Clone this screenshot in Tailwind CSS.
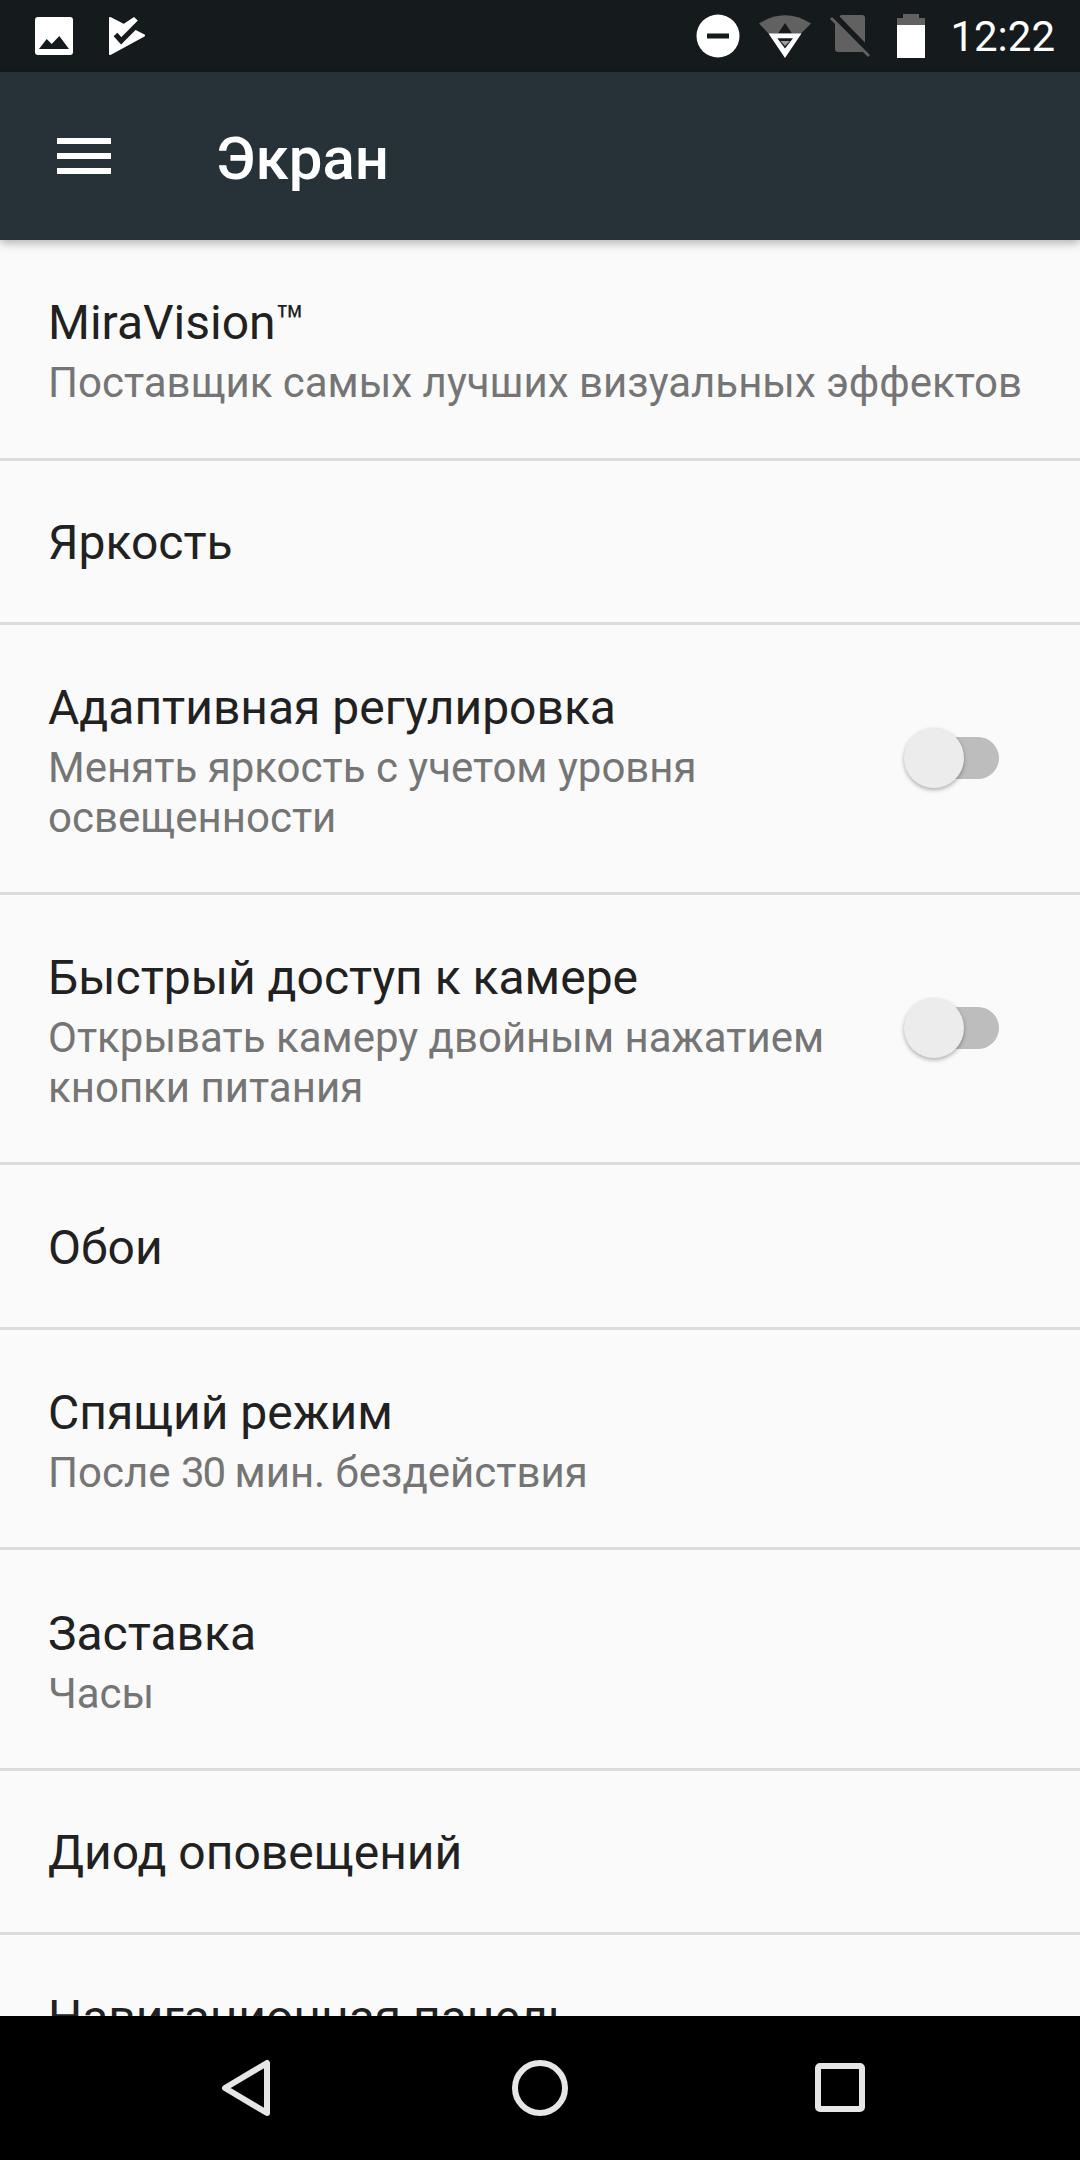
<!DOCTYPE html>
<html lang="ru">
<head>
  <meta charset="UTF-8">
  <title>Экран</title>
  <script src="https://cdn.jsdelivr.net/npm/@tailwindcss/browser@4"></script>
</head>
<body class="bg-[#fafafa] font-['Roboto',sans-serif]">
<div class="w-[1080px] h-[2160px] relative overflow-hidden flex flex-col">

  <!-- status bar -->
  <div class="h-[72px] shrink-0 bg-[#151a1d] flex items-center pl-[35px] pr-[25px]">
    <svg width="38" height="38" viewBox="0 0 38 38"><path fill="#fff" fill-rule="evenodd" d="M3 0h32a3 3 0 0 1 3 3v32a3 3 0 0 1-3 3H3a3 3 0 0 1-3-3V3a3 3 0 0 1 3-3zM4 32h30L24.300 19l-7.600 8-5-5z"/></svg>
    <svg class="ml-[36px]" width="38" height="38" viewBox="0 0 38 38"><path fill="#fff" stroke="#fff" stroke-width="2" stroke-linejoin="round" d="M1 1 35 18.500 1 37z"/><path fill="#fff" d="M25 0l4 3.700L14 19 10 10z"/><path fill="none" stroke="#151a1d" stroke-width="5" d="M6.500 17.500 12.200 23.800 31 5"/></svg>
    <div class="ml-auto flex items-center">
      <svg width="44" height="44" viewBox="0 0 44 44"><circle cx="22" cy="22" r="21.500" fill="#fff"/><rect x="11" y="19.500" width="22" height="5" fill="#151a1d"/></svg>
      <svg class="ml-[19px]" width="53" height="44" viewBox="0 0 53 44"><path fill="#616161" d="M0 9.500Q26-7 52 9.500L41 20.500H10.500z"/><path fill="#151a1d" d="M26 9l7 10.500H19z"/><path fill="#fff" fill-rule="evenodd" d="M9.500 19.500h33L26 44zM18.300 24.300 26 34.500 34 24.300z"/><path fill="#9e9e9e" d="M21.500 27h9.500L26 32z"/></svg>
      <svg class="ml-[18px]" width="40" height="44" viewBox="0 0 40 44"><path fill="#616161" d="M11 1h21a3 3 0 0 1 3 3v31a3 3 0 0 1-3 3H8a3 3 0 0 1-3-3V7z"/><path stroke="#151a1d" stroke-width="6" d="M4 1l37 38"/><path stroke="#616161" stroke-width="3" d="M1 4l38 38"/></svg>
      <svg class="ml-[27px]" width="28" height="44" viewBox="0 0 28 44"><path fill="#616161" d="M6 0h16v4h6v8H0V4h6z"/><rect y="11" width="28" height="33" fill="#fff"/></svg>
      <span class="ml-[25px] pt-[2px] text-[42px] leading-[44px] text-white">12:22</span>
    </div>
  </div>

  <!-- toolbar -->
  <div class="h-[168px] shrink-0 bg-[#263238] flex items-center pl-[57px] shadow-[0_4px_8px_rgba(0,0,0,0.25)] relative z-10">
    <div class="w-[54px] flex flex-col gap-[9px]">
      <div class="h-[6px] bg-white"></div>
      <div class="h-[6px] bg-white"></div>
      <div class="h-[6px] bg-white"></div>
    </div>
    <span class="ml-[105px] pt-[5px] text-[60px] font-medium text-white">Экран</span>
  </div>

  <!-- settings list -->
  <div class="flex-1 flex flex-col text-[48px] leading-[60px] text-[#212121]">
    <div class="h-[221px] shrink-0 border-b-[3px] border-[#dcdcdc] pt-[3px] px-[48px] flex flex-col justify-center">
      <div>MiraVision™</div>
      <div class="mt-[5px] text-[42px] leading-[50px] text-[#757575]">Поставщик самых лучших визуальных эффектов</div>
    </div>
    <div class="h-[164px] shrink-0 border-b-[3px] border-[#dcdcdc] pt-[3px] px-[48px] flex items-center">Яркость</div>
    <div class="h-[270px] shrink-0 border-b-[3px] border-[#dcdcdc] pt-[4px] pl-[48px] pr-[81px] flex items-center">
      <div class="flex-1">
        <div>Адаптивная регулировка</div>
        <div class="mt-[5px] text-[42px] leading-[50px] text-[#757575]">Менять яркость с учетом уровня<br>освещенности</div>
      </div>
      <div class="relative -mt-[5px] w-[93px] h-[42px] bg-[#bdbdbd] rounded-full">
        <div class="absolute left-[-2px] top-[-9px] w-[60px] h-[60px] rounded-full bg-[#ececec] shadow-[0_2px_4px_rgba(0,0,0,0.3)]"></div>
      </div>
    </div>
    <div class="h-[270px] shrink-0 border-b-[3px] border-[#dcdcdc] pt-[4px] pl-[48px] pr-[81px] flex items-center">
      <div class="flex-1">
        <div>Быстрый доступ к камере</div>
        <div class="mt-[5px] text-[42px] leading-[50px] text-[#757575]">Открывать камеру двойным нажатием<br>кнопки питания</div>
      </div>
      <div class="relative -mt-[5px] w-[93px] h-[42px] bg-[#bdbdbd] rounded-full">
        <div class="absolute left-[-2px] top-[-9px] w-[60px] h-[60px] rounded-full bg-[#ececec] shadow-[0_2px_4px_rgba(0,0,0,0.3)]"></div>
      </div>
    </div>
    <div class="h-[165px] shrink-0 border-b-[3px] border-[#dcdcdc] pt-[3px] px-[48px] flex items-center">Обои</div>
    <div class="h-[220px] shrink-0 border-b-[3px] border-[#dcdcdc] pt-[4px] px-[48px] flex flex-col justify-center">
      <div>Спящий режим</div>
      <div class="mt-[5px] text-[42px] leading-[50px] text-[#757575]">После <span class="tracking-[-2px]">30</span> мин. бездействия</div>
    </div>
    <div class="h-[221px] shrink-0 border-b-[3px] border-[#dcdcdc] pt-[4px] px-[48px] flex flex-col justify-center">
      <div>Заставка</div>
      <div class="mt-[5px] text-[42px] leading-[50px] text-[#757575]">Часы</div>
    </div>
    <div class="h-[164px] shrink-0 border-b-[3px] border-[#dcdcdc] pt-[3px] px-[48px] flex items-center">Диод оповещений</div>
    <div class="h-[165px] shrink-0 px-[48px] flex items-center">Навигационная панель</div>
  </div>

  <!-- nav bar -->
  <div class="absolute left-0 bottom-0 w-full h-[144px] bg-black">
    <svg class="absolute left-[220px] top-[43px]" width="52" height="58" viewBox="0 0 52 58"><path fill="none" stroke="#e6e6e6" stroke-width="6" stroke-linejoin="round" d="M47 4v50L5 29z"/></svg>
    <svg class="absolute left-[510px] top-[42px]" width="60" height="60" viewBox="0 0 60 60"><circle cx="30" cy="30" r="25" fill="none" stroke="#e6e6e6" stroke-width="6"/></svg>
    <svg class="absolute left-[815px] top-[47px]" width="50" height="50" viewBox="0 0 50 50"><rect x="3" y="3" width="44" height="43" rx="2" fill="none" stroke="#e6e6e6" stroke-width="6"/></svg>
  </div>
</div>
</body>
</html>
